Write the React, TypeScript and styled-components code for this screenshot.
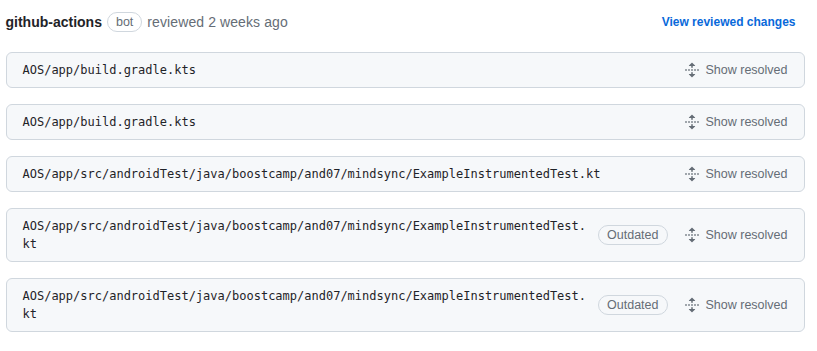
import React from 'react';
import styled, { createGlobalStyle } from 'styled-components';

const GlobalStyle = createGlobalStyle`
  body {
    margin: 0;
    background: #ffffff;
    font-family: "Liberation Sans", Arial, sans-serif;
    color: #1f2328;
  }
`;

const Page = styled.div`
  width: 799px;
  padding: 12px 0 0 5.5px;
`;

const Header = styled.div`
  display: flex;
  align-items: center;
  height: 20px;
  margin-bottom: 20px;
  padding-right: 9px;
  font-size: 14px;
`;

const Author = styled.span`
  font-weight: 700;
  color: #1f2328;
`;

const Label = styled.span`
  display: inline-flex;
  align-items: center;
  height: 20px;
  box-sizing: border-box;
  padding: 0 8px;
  border: 1px solid #d0d7de;
  border-radius: 2em;
  font-size: 12.5px;
  font-weight: 500;
  color: #656d76;
  white-space: nowrap;
`;

const BotLabel = styled(Label)`
  margin: 0 5px;
`;

const Muted = styled.span`
  color: #656d76;
  letter-spacing: 0.1px;
`;

const ViewLink = styled.a`
  margin-left: auto;
  font-size: 12px;
  font-weight: 700;
  color: #0969da;
  text-decoration: none;
`;

const List = styled.div`
  display: flex;
  flex-direction: column;
  gap: 16px;
`;

const Card = styled.div`
  display: flex;
  align-items: center;
  gap: 12px;
  padding: 8px 16px;
  background: #f6f8fa;
  border: 1px solid #d0d7de;
  border-radius: 6px;
`;

const Path = styled.div`
  flex: 1;
  min-width: 0;
  font-family: "DejaVu Sans Mono", "Liberation Mono", monospace;
  font-size: 12px;
  line-height: 18px;
  color: #1f2328;
  word-break: break-all;
`;

const Actions = styled.div`
  display: flex;
  align-items: center;
  gap: 16px;
`;

const ShowButton = styled.button`
  display: flex;
  align-items: center;
  gap: 6px;
  padding: 0;
  border: 0;
  background: none;
  font-family: inherit;
  font-size: 12.5px;
  color: #656d76;
  white-space: nowrap;
`;

const UnfoldIcon = () => (
  <svg width="16" height="16" viewBox="0 0 16 16" fill="#656d76">
    <path d="m8.177.677 2.896 2.896a.25.25 0 0 1-.177.427H8.75v1.25a.75.75 0 0 1-1.5 0V4H5.104a.25.25 0 0 1-.177-.427L7.823.677a.25.25 0 0 1 .354 0ZM7.25 10.75a.75.75 0 0 1 1.5 0V12h2.146a.25.25 0 0 1 .177.427l-2.896 2.896a.25.25 0 0 1-.354 0l-2.896-2.896A.25.25 0 0 1 5.104 12H7.250v-1.25Zm-5-2a.75.75 0 0 0 0-1.5h-.5a.75.75 0 0 0 0 1.5h.5ZM6 8a.75.75 0 0 1-.75.75h-.5a.75.75 0 0 1 0-1.5h.5A.75.75 0 0 1 6 8Zm2.25.75a.75.75 0 0 0 0-1.5h-.5a.75.75 0 0 0 0 1.5h.5ZM12 8a.75.75 0 0 1-.75.75h-.5a.75.75 0 0 1 0-1.5h.5A.75.75 0 0 1 12 8Zm2.25.75a.75.75 0 0 0 0-1.5h-.5a.75.75 0 0 0 0 1.5h.5Z" />
  </svg>
);

const files = [
  { path: 'AOS/app/build.gradle.kts', outdated: false },
  { path: 'AOS/app/build.gradle.kts', outdated: false },
  { path: 'AOS/app/src/androidTest/java/boostcamp/and07/mindsync/ExampleInstrumentedTest.kt', outdated: false },
  { path: 'AOS/app/src/androidTest/java/boostcamp/and07/mindsync/ExampleInstrumentedTest.kt', outdated: true },
  { path: 'AOS/app/src/androidTest/java/boostcamp/and07/mindsync/ExampleInstrumentedTest.kt', outdated: true },
];

function App() {
  return (
    <Page>
      <GlobalStyle />
      <Header>
        <Author>github-actions</Author>
        <BotLabel>bot</BotLabel>
        <Muted>reviewed 2 weeks ago</Muted>
        <ViewLink href="#">View reviewed changes</ViewLink>
      </Header>
      <List>
        {files.map((f, i) => (
          <Card key={i}>
            <Path>{f.path}</Path>
            <Actions>
              {f.outdated && <Label>Outdated</Label>}
              <ShowButton>
                <UnfoldIcon />
                Show resolved
              </ShowButton>
            </Actions>
          </Card>
        ))}
      </List>
    </Page>
  );
}

export default App;
